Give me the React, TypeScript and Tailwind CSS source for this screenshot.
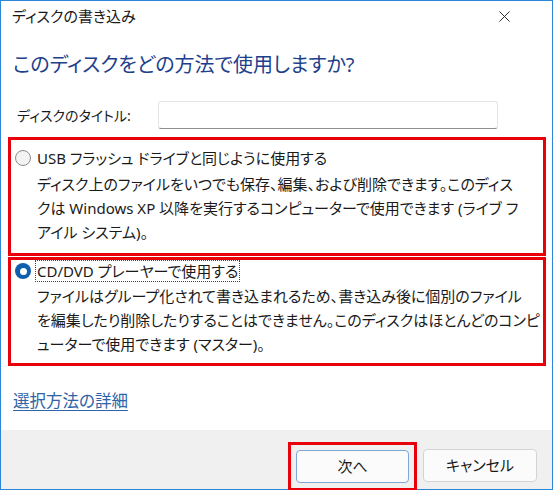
import { X } from "lucide-react";

const font = "[font-family:'Noto_Sans','Noto_Sans_CJK_JP',sans-serif] [font-feature-settings:'palt']";

function Radio({ checked }: { checked: boolean }) {
  if (checked) {
    return (
      <span className="flex h-[16px] w-[16px] shrink-0 items-center justify-center rounded-full bg-[#0f5fae]">
        <span className="h-[7px] w-[7px] rounded-full bg-white" />
      </span>
    );
  }
  return (
    <span className="h-[16px] w-[16px] shrink-0 rounded-full border border-[#8c8c8c] bg-[#f3f3f3]" />
  );
}

export default function App() {
  return (
    <div className={`${font} flex h-[490px] w-[553px] flex-col border border-[#2b86d6] bg-white text-[#1a1a1a]`}>
      {/* title bar */}
      <div className="flex h-[30px] items-center justify-between pl-[11px] pr-[38px]">
        <span className="text-[15px]">ディスクの書き込み</span>
        <X className="h-[19px] w-[19px] text-[#222]" strokeWidth={1.2} />
      </div>

      <div className="flex-1 pl-[12px] pr-[6px]">
        <h1 className="mt-[19px] text-[20px] leading-[30px] text-[#1e3f8c]">
          このディスクをどの方法で使用しますか?
        </h1>

        <div className="mt-[21px] flex items-center">
          <span className="w-[145px] pl-[4px] text-[14px]">ディスクのタイトル:</span>
          <div className="h-[28px] w-[340px] rounded-[3px] border border-[#e5e5e5] border-b-[#8f8f8f] bg-white" />
        </div>

        <div className="-ml-[5px] mt-[8px] h-[119px] w-[538px] border-[3px] border-[#e8000b] pl-[4px] pt-[6px]">
          <div className="mb-[2px] flex items-center gap-[6px]">
            <Radio checked={false} />
            <span className="text-[15px] leading-[24px]">USB フラッシュ ドライブと同じように使用する</span>
          </div>
          <p className="pl-[22px] text-[15px] leading-[24px] whitespace-nowrap">
            ディスク上のファイルをいつでも保存、編集、および削除できます。このディス
            <br />
            クは Windows XP 以降を実行するコンピューターで使用できます (ライブ フ
            <br />
            アイル システム)。
          </p>
        </div>

        <div className="-ml-[5px] mt-[1px] h-[109px] w-[538px] border-[3px] border-[#e8000b] pl-[4px]">
          <div className="mb-[2px] flex items-center gap-[6px]">
            <Radio checked={true} />
            <span className="-ml-[2px] border border-dotted border-[#444] px-[1px] text-[15px] leading-[20px]">
              CD/DVD プレーヤーで使用する
            </span>
          </div>
          <p className="pl-[22px] text-[15px] leading-[24px] whitespace-nowrap">
            ファイルはグループ化されて書き込まれるため、書き込み後に個別のファイル
            <br />
            を編集したり削除したりすることはできません。このディスクはほとんどのコンピ
            <br />
            ューターで使用できます (マスター)。
          </p>
        </div>

        <a className="mt-[24px] inline-block text-[16.5px] leading-[22px] text-[#2f63a8] underline underline-offset-[3px]">
          選択方法の詳細
        </a>
      </div>

      <div className="flex h-[59px] items-start justify-end gap-[6px] bg-[#f0f0f0] pr-[15px] pt-[19px]">
        <div className="-mt-[7px] border-[3px] border-[#e8000b] p-[5px]">
          <button className="h-[33px] w-[113px] rounded-[4px] border border-[#7fa6d4] bg-[#fbfbfb] text-[15px]">
            次へ
          </button>
        </div>
        <button className="h-[33px] w-[114px] rounded-[4px] border border-[#d3d3d3] bg-[#fbfbfb] text-[15px]">
          キャンセル
        </button>
      </div>
    </div>
  );
}
